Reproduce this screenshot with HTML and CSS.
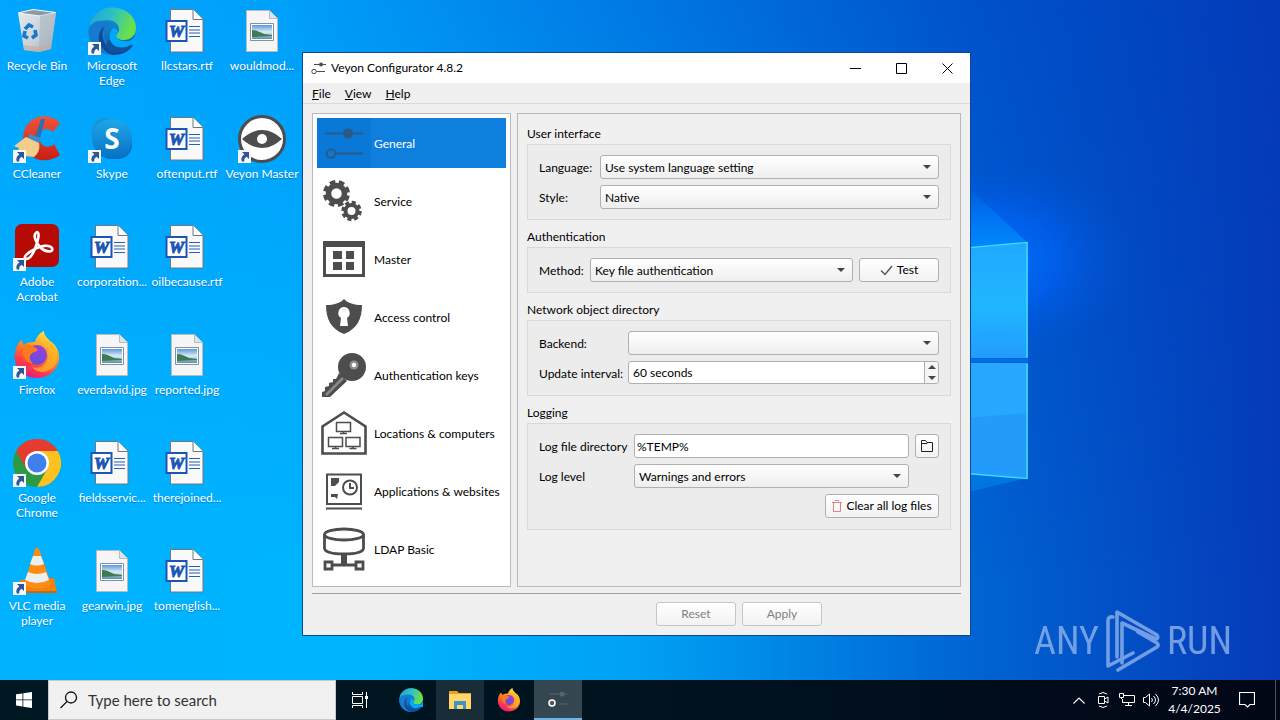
FILE: index.html
```html
<!DOCTYPE html>
<html lang="en">
<head>
<meta charset="utf-8">
<title>Veyon Configurator 4.8.2</title>
<link rel="stylesheet" href="styles.css">
</head>
<body>
<svg class="defs" width="0" height="0" aria-hidden="true">
  <defs>
    <linearGradient id="edgeA" x1="0" y1="0" x2="1" y2="0.3"><stop offset="0" stop-color="#1fa0d8"/><stop offset=".5" stop-color="#2cc0c8"/><stop offset="1" stop-color="#6be047"/></linearGradient>
    <linearGradient id="edgeB" x1="0" y1="0" x2="0" y2="1"><stop offset="0" stop-color="#1a9be0"/><stop offset="1" stop-color="#0c59a8"/></linearGradient>
    <linearGradient id="ffA" x1=".8" y1="0" x2=".3" y2="1"><stop offset="0" stop-color="#fff04a"/><stop offset=".4" stop-color="#ff9a20"/><stop offset=".75" stop-color="#ff3f45"/><stop offset="1" stop-color="#e31587"/></linearGradient>
    <linearGradient id="ffB" x1=".8" y1="0" x2=".2" y2="1"><stop offset="0" stop-color="#a13be0"/><stop offset="1" stop-color="#5a52d8"/></linearGradient>
    <linearGradient id="skyA" x1="0" y1="0" x2="0" y2="1"><stop offset="0" stop-color="#1fa8e8"/><stop offset="1" stop-color="#0670c4"/></linearGradient>
    <linearGradient id="binA" x1="0" y1="0" x2="1" y2="1"><stop offset="0" stop-color="#e4ebf0"/><stop offset=".6" stop-color="#c8d0d8"/><stop offset="1" stop-color="#9eabb8"/></linearGradient>
    <linearGradient id="ccA" x1="0" y1="0" x2="0" y2="1"><stop offset="0" stop-color="#f0543c"/><stop offset="1" stop-color="#c81e14"/></linearGradient>
    <linearGradient id="photoA" x1="0" y1="0" x2="0" y2="1"><stop offset="0" stop-color="#5c98dc"/><stop offset=".5" stop-color="#dcecf4"/><stop offset="1" stop-color="#5b8fae"/></linearGradient>
    <symbol id="i-link" viewBox="0 0 13 13"><path d="M0 0h13v13H0z" fill="#f7f7f7"/><path d="M4 2h7v7L8.700 6.800C6.500 8 6 9.500 6.300 11.500H3.800C2.600 8.500 3.800 6 6.400 4.400z" fill="#2b5797"/></symbol>
    <symbol id="i-bin" viewBox="0 0 48 48"><path d="M5 6 20 2.500l23 3L38 42l-12 3-15-2z" fill="url(#binA)"/><path d="M5 6 20 2.500l23 3-16 3.500z" fill="#8d9aa6" stroke="#f1f5f8" stroke-width="1.200"/><path d="m27 9-1 36 12-3L43 5.500z" fill="#a9b4be" opacity=".6"/><path d="M11 38l15 2 12-2-1 4-11 3-15-2z" fill="#c8a89a" opacity=".6"/><g fill="none" stroke="#1778d0" stroke-width="3.600"><path d="m12 22 4-4 4 2"/><path d="m22 23 1 5-4 3"/><path d="m15 31-4-2 1-5"/></g></symbol>
    <symbol id="i-edge" viewBox="0 0 48 48"><circle cx="24" cy="24" r="23.500" fill="url(#edgeB)"/><path d="M1 20C3 8 13 .5 24 .5 38 .5 48 10 48 21c0 8-6 12-12 12-5 0-8-2-8-4s3-3 3-7c0-5-5-9-11-9C11 13 3 17 1 20z" fill="url(#edgeA)"/><path d="M.5 24C2 16 9 13 16 14c7 0 10 4 10 4-9-1-10 6-10 9 0 10 9 15 17 14 5-1 9-3 11-5-4 7-12 12-20 12C11 48 .5 37 .5 24z" fill="#147bd0"/><path d="M17 19c-5 6-3 18 6 23 7 4 16 0 20-5 2-2 3-1 2 1-4 7-12 10-20 10-9-2-16-12-14-20 1-5 4-8 6-9z" fill="#104a94"/><path class="edge-gap" d="M28 29c0 3 5 6 13 5 4-1 7-5 7-9v13h-4c-8 7-20 4-22-5-1-6 1-11 4-12 5 2 4 5 2 8z"/><path d="M22 33c3 8 13 10 22 4-5 8-14 9-22 7-6-4-4-10 0-11z" fill="#12539c"/></symbol>
    <symbol id="i-doc" viewBox="0 0 48 48"><path d="M7.500 2.500H30l10 10V45H7.500z" fill="#f9f9f9" stroke="#707780"/><path d="M30 2.500v10h10" fill="#fff" stroke="#707780"/><path d="M26 19.500h11m-11 3.500h11m-11 3h11m-11 3.500h11" stroke="#2a5fb8"/><path d="M3.500 14h20v20h-20z" fill="#fff" stroke="#1d55b4" stroke-width="2"/><text x="13.500" y="30" text-anchor="middle" class="doc-letter">W</text></symbol>
    <symbol id="i-jpg" viewBox="0 0 48 48"><path d="M8.500 3.500h23l8 8v33h-31z" fill="#f5f5f5" stroke="#b8bcc0"/><path d="M31.500 3.500v8h8" fill="#dfe3e6" stroke="#b8bcc0"/><path d="M12.500 16.500h23v17h-23z" fill="#fff" stroke="#7f92a8"/><path d="M14 18h20v14H14z" fill="url(#photoA)"/><path d="M14 23c4 0 8 2 12 4l8 1v1c-8 0-14 1-20 1z" fill="#3f7a53"/></symbol>
    <symbol id="i-cc" viewBox="0 0 48 48"><path d="M47 8C36-3 18 0 12 14c-6 16 3 28 15 31 8 1 15-1 20-5l-6-11c-5 5-14 3-15-6-1-8 8-12 14-6z" fill="url(#ccA)"/><path d="M28 4h4l-6 23-5-2z" fill="#2d6eb0"/><path d="m16 19 12 4-3 8-10-7z" fill="#3d8bcb"/><path d="M13 22 1 31l5 2-2 5 8 3 9 1c5-4 6-9 5-14z" fill="#f3cd8a"/></symbol>
    <symbol id="i-skype" viewBox="0 0 48 48"><circle cx="17" cy="17" r="14" fill="#1a94dc"/><circle cx="30" cy="30" r="14" fill="#0a72c6"/><circle cx="24" cy="24" r="20" fill="url(#skyA)"/><text x="24" y="34" text-anchor="middle" class="skype-letter">S</text></symbol>
    <symbol id="i-veyon" viewBox="0 0 48 48"><circle cx="24" cy="24" r="22.500" fill="#fff" stroke="#4d4d4d" stroke-width="3"/><path d="M4 24c7-6 13-9 20-9s13 3 20 9c-7 6-13 9-20 9S11 30 4 24z" fill="#4d4d4d"/><circle cx="24" cy="24" r="5" fill="#fff"/></symbol>
    <symbol id="i-acro" viewBox="0 0 48 48"><rect x="2" y="1" width="44" height="43" rx="7" fill="#b50b04"/><path d="M24 9c-5 3-1 11 4 16 4 4 13 5 11 0-3-4-12-2-17 1-6 3-13 8-9 10 5 0 8-7 10-13 2-5 4-14 1-14z" fill="none" stroke="#fff" stroke-width="2.600"/></symbol>
    <symbol id="i-ff" viewBox="0 0 48 48"><path d="M2 22C3 16 5 11 9 9c0 2 1 4 2 5 3-3 7-3 11-3 1-4 4-9 9-11 0 5 3 6 6 10 7 4 10 12 9 19-2 11-11 18-22 18C10 47 0 36 2 22z" fill="url(#ffA)"/><circle cx="24" cy="24" r="10" fill="url(#ffB)"/><path d="M10 14c5-1 12 1 15 5-2 2-5 2-7 4-2 3-2 6 2 9-7 0-11-6-10-18z" fill="#ff7a1c"/><path d="M30 13c6 5 7 12 4 17-3 6-9 8-15 6 7 9 23 5 25-7 1-9-4-16-10-19z" fill="#ffb52a" opacity=".75"/></symbol>
    <symbol id="i-chrome" viewBox="0 0 48 48"><circle cx="24" cy="24" r="24" fill="#2c9a42"/><path d="M3.200 12A24 24 0 0 1 44.800 12H24L13.600 30z" fill="#e53b30"/><path d="M44.800 12A24 24 0 0 1 24 48l10.400-18L24 12z" fill="#fcc21f"/><circle cx="24" cy="24" r="12" fill="#fff"/><circle cx="24" cy="24" r="9.500" fill="#3f7fee"/></symbol>
    <symbol id="i-vlc" viewBox="0 0 48 48"><path d="m7 33 34-2 3 15H6z" fill="#f08210"/><path d="M22 2q2-2 4 0l12 35c-4 6-23 6-27 0z" fill="#ff8b12"/><path d="m20 9 8 0 3 8q-7 3-14 0zM15 25q9 4 18 0l3 8q-12 6-24 0z" fill="#eceff0"/><path d="M6 44h38v2H6z" fill="#d46505"/></symbol>
    <symbol id="i-sliders" viewBox="0 0 48 48"><path d="M5 13.500h38M15 33.500h28" stroke="currentColor" stroke-width="2"/><circle cx="28" cy="13.500" r="5" fill="currentColor"/><circle cx="11" cy="33.500" r="4.200" fill="none" stroke="currentColor" stroke-width="2"/></symbol>
    <symbol id="i-folder" viewBox="0 0 24 24"><path d="M1 3h8l2 2h12v5H1z" fill="#e8a223"/><path d="M1 6h22v15H1z" fill="#ffd667"/><path d="M6 13h12v8h-3v-4H9v4H6z" fill="#3c93c9"/></symbol>
  </defs>
</svg>

<main class="desktop">
  <svg class="wallpaper" viewBox="0 0 1280 720" preserveAspectRatio="none" aria-hidden="true">
    <defs>
      <linearGradient id="bgTop" x1="0" y1="0" x2="1" y2="0"><stop offset="0" stop-color="#00a6fe"/><stop offset=".22" stop-color="#00a0fa"/><stop offset=".5" stop-color="#0078e4"/><stop offset=".76" stop-color="#0052cc"/><stop offset="1" stop-color="#043bb8"/></linearGradient>
      <linearGradient id="bgLow" x1="0" y1="0" x2="1" y2="0"><stop offset="0" stop-color="#00b2ff"/><stop offset=".3" stop-color="#00b4ff"/><stop offset=".5" stop-color="#00a0f4"/><stop offset=".76" stop-color="#0064d2"/><stop offset="1" stop-color="#053ab8"/></linearGradient>
      <linearGradient id="fade" x1="0" y1="0" x2="0" y2="1"><stop offset="0" stop-color="#000"/><stop offset=".8" stop-color="#fff"/></linearGradient>
      <mask id="lowMask"><path d="M0 0h1280v720H0z" fill="url(#fade)"/></mask>
      <radialGradient id="glow"><stop offset="0" stop-color="#0074ff"/><stop offset=".45" stop-color="#0062f4" stop-opacity=".7"/><stop offset="1" stop-color="#0050d0" stop-opacity="0"/></radialGradient>
      <linearGradient id="beam" x1="0" y1="0" x2="0" y2="1"><stop offset="0" stop-color="#009cff" stop-opacity="0"/><stop offset="1" stop-color="#009cff" stop-opacity=".6"/></linearGradient>
      <linearGradient id="paneA" x1="0" y1="0" x2="0" y2="1"><stop offset="0" stop-color="#22a8ff"/><stop offset=".55" stop-color="#20b6ff"/><stop offset="1" stop-color="#229cff"/></linearGradient>
    </defs>
    <path d="M0 0h1280v720H0z" fill="url(#bgTop)"/>
    <path d="M0 0h1280v720H0z" fill="url(#bgLow)" mask="url(#lowMask)"/>
    <ellipse cx="990" cy="260" rx="150" ry="105" fill="url(#glow)"/>
    <path d="M960 180 1028 243l-68 8z" fill="url(#beam)"/>
    <path d="M960 465l68 13-68 16z" fill="#008cf4" opacity=".5"/>
    <path d="M900 255 1028 243v115H900z" fill="url(#paneA)"/>
    <path d="M900 363h128v115l-128-10z" fill="#239bfa"/>
    <path d="M900 363h128v50l-128 10z" fill="#27a8ff"/>
    <path d="M900 254 1027 242.500v115M900 468l127 10.500V364" fill="none" stroke="#3fd8ff" stroke-width="1.500"/>
    <path d="M900 360.500h128" stroke="#006ee4" stroke-width="4"/>
  </svg>

  <nav class="shortcuts" aria-label="Desktop">
    <a class="shortcut" href="#"><svg><use href="#i-bin"/></svg>Recycle Bin</a>
    <a class="shortcut" href="#"><svg><use href="#i-cc"/><use href="#i-link" y="35" width="13" height="13"/></svg>CCleaner</a>
    <a class="shortcut" href="#"><svg><use href="#i-acro"/><use href="#i-link" y="35" width="13" height="13"/></svg>Adobe<br>Acrobat</a>
    <a class="shortcut" href="#"><svg><use href="#i-ff"/><use href="#i-link" y="35" width="13" height="13"/></svg>Firefox</a>
    <a class="shortcut" href="#"><svg><use href="#i-chrome"/><use href="#i-link" y="35" width="13" height="13"/></svg>Google<br>Chrome</a>
    <a class="shortcut" href="#"><svg><use href="#i-vlc"/><use href="#i-link" y="35" width="13" height="13"/></svg>VLC media<br>player</a>
    <a class="shortcut" href="#"><svg><use href="#i-edge"/><use href="#i-link" y="35" width="13" height="13"/></svg>Microsoft<br>Edge</a>
    <a class="shortcut" href="#"><svg><use href="#i-skype"/><use href="#i-link" y="35" width="13" height="13"/></svg>Skype</a>
    <a class="shortcut" href="#"><svg><use href="#i-doc"/></svg>corporation...</a>
    <a class="shortcut" href="#"><svg><use href="#i-jpg"/></svg>everdavid.jpg</a>
    <a class="shortcut" href="#"><svg><use href="#i-doc"/></svg>fieldsservic...</a>
    <a class="shortcut" href="#"><svg><use href="#i-jpg"/></svg>gearwin.jpg</a>
    <a class="shortcut" href="#"><svg><use href="#i-doc"/></svg>llcstars.rtf</a>
    <a class="shortcut" href="#"><svg><use href="#i-doc"/></svg>oftenput.rtf</a>
    <a class="shortcut" href="#"><svg><use href="#i-doc"/></svg>oilbecause.rtf</a>
    <a class="shortcut" href="#"><svg><use href="#i-jpg"/></svg>reported.jpg</a>
    <a class="shortcut" href="#"><svg><use href="#i-doc"/></svg>therejoined...</a>
    <a class="shortcut" href="#"><svg><use href="#i-doc"/></svg>tomenglish...</a>
    <a class="shortcut" href="#"><svg><use href="#i-jpg"/></svg>wouldmod...</a>
    <a class="shortcut" href="#"><svg><use href="#i-veyon"/><use href="#i-link" y="35" width="13" height="13"/></svg>Veyon Master</a>
  </nav>

  <div class="watermark"><span>ANY</span>
    <svg width="56" height="64" viewBox="0 0 56 64" aria-hidden="true"><g fill="none" stroke="currentColor" stroke-width="3.600" stroke-linejoin="round" stroke-linecap="round"><path d="M8 8Q3 7 3 12v45L28 44"/><path d="M12 48V3l40 23q2 3-1 4L17 14v40"/><path d="M13 61 52 38q2-2 0-4L33 23"/></g></svg>
    <span>RUN</span></div>

  <section class="window" aria-label="Veyon Configurator">
    <header class="titlebar">
      <svg class="app-icon" viewBox="0 0 16 14"><path d="M3 3.500h12M5 10.500h9" stroke="#4d4d4d"/><circle cx="10" cy="3.500" r="2" fill="#4d4d4d"/><circle cx="3" cy="10.500" r="2.200" fill="#fff" stroke="#4d4d4d"/></svg>
      <h1 class="title">Veyon Configurator 4.8.2</h1>
      <button class="caption" aria-label="Minimize"><svg width="11" height="11"><path d="M0 5.500h11" stroke="#000"/></svg></button>
      <button class="caption" aria-label="Maximize"><svg width="11" height="11"><path d="M.5.5h10v10H.5z" stroke="#000" fill="none"/></svg></button>
      <button class="caption" aria-label="Close"><svg width="11" height="11"><path d="m.5.500 10 10m0-10-10 10" stroke="#000"/></svg></button>
    </header>
    <div class="menubar">
      <button class="menu"><u>F</u>ile</button><button class="menu"><u>V</u>iew</button><button class="menu"><u>H</u>elp</button>
    </div>
    <div class="body">
      <nav class="pages" aria-label="Pages">
        <button class="page selected"><svg><use href="#i-sliders"/></svg><span>General</span></button>
        <button class="page"><svg viewBox="0 0 48 48"><g fill="none" stroke="currentColor"><circle cx="16.500" cy="15.500" r="8" stroke-width="5.500"/><circle cx="16.500" cy="15.500" r="11.500" stroke-width="4" stroke-dasharray="5.500 3.530" transform="rotate(10 16.500 15.500)"/><circle cx="31.500" cy="33" r="6" stroke-width="4"/><circle cx="31.500" cy="33" r="8.500" stroke-width="3.500" stroke-dasharray="4 2.670"/></g></svg><span>Service</span></button>
        <button class="page"><svg viewBox="0 0 48 48"><path d="M3 5h42v36H3zm3 6v27h36V11z" fill-rule="evenodd"/><path d="M13 15h9v8h-9zm13 0h8v8h-8zM13 26h9v8h-9zm13 0h8v8h-8z"/></svg><span>Master</span></button>
        <button class="page"><svg viewBox="0 0 48 48"><path d="M24 5c4 4 10 6 18 6 0 14-5 24-18 29C11 35 6 25 6 11c8 0 14-2 18-6zm0 8a6 6 0 0 0-3 11l-1 8h8l-1-8a6 6 0 0 0-3-11z" fill-rule="evenodd"/></svg><span>Access control</span></button>
        <button class="page"><svg viewBox="0 0 48 48"><circle cx="32" cy="15" r="14"/><path d="m19 21 8 8L10 45H2v-5l3-1v-4l4-1v-3l4-1v-3h3z"/><path d="M23 26 6 43" stroke="#8a8a8a" stroke-width="2.500"/><circle cx="34" cy="13" r="4.500" fill="#909090"/><circle cx="34" cy="13" r="2.200" fill="#fff"/></svg><span>Authentication keys</span></button>
        <button class="page"><svg viewBox="0 0 48 48"><g fill="none" stroke="currentColor"><path d="M2.500 43.500v-27L24 2.500l21.500 14v27z" stroke-width="2.600"/><path d="M16.500 12.500h14v9h-14zM8.500 27.500h14v9h-14zM26 27.500h14v9H26z" stroke-width="1.500"/><path d="M20 23.500h7M12 38.500h7m10.500 0h7M23.500 21v3m-8 12v3M33 36v3" stroke-width="1.500"/></g></svg><span>Locations &amp; computers</span></button>
        <button class="page"><svg viewBox="0 0 48 48"><g fill="none" stroke="currentColor" stroke-width="2"><path d="M7 6.500h34V36H7zM6 40.500h36"/><circle cx="30" cy="19.500" r="7"/><path d="M30 15v5h4"/></g><path d="M11 10h8v4l-4 4h-4zM11 26h7l-1 5-2-2h-4z"/></svg><span>Applications &amp; websites</span></button>
        <button class="page"><svg viewBox="0 0 48 48"><g fill="none" stroke="currentColor" stroke-width="2.800"><ellipse cx="24" cy="8.500" rx="19.500" ry="5.500"/><path d="M4.500 8.500V22c0 4 8 6 19.500 6s19.500-2 19.500-6V8.500M12 39h24M5 36h7v7H5zM36 36h7v7h-7z"/></g><path d="M21 28h6v10h-6z"/></svg><span>LDAP Basic</span></button>
      </nav>
      <form class="panel">
        <h2 class="group-title">User interface</h2>
        <div class="group form-a">
          <label for="lang">Language:</label><select id="lang"><option>Use system language setting</option></select>
          <label for="style">Style:</label><select id="style"><option>Native</option></select>
        </div>
        <h2 class="group-title">Authentication</h2>
        <div class="group form-b">
          <label for="method">Method:</label><select id="method"><option>Key file authentication</option></select>
          <button type="button" class="btn"><svg width="13" height="12"><path d="m1 6.500 4 4L12 2" fill="none" stroke="#555" stroke-width="1.400"/></svg>Test</button>
        </div>
        <h2 class="group-title">Network object directory</h2>
        <div class="group form-c">
          <label for="backend">Backend:</label><select id="backend"><option></option></select>
          <label for="interval">Update interval:</label>
          <div class="spin"><input id="interval" type="text" value="60 seconds"><span class="steps"><button type="button" aria-label="Increase"><svg width="8" height="4"><path d="M0 4h8L4 0z"/></svg></button><button type="button" aria-label="Decrease"><svg width="8" height="4"><path d="M0 0h8L4 4z"/></svg></button></span></div>
        </div>
        <h2 class="group-title">Logging</h2>
        <div class="group form-d">
          <label for="dir">Log file directory</label><input class="field" id="dir" type="text" value="%TEMP%">
          <button type="button" class="btn browse" aria-label="Browse"><svg width="12" height="12"><path d="M.5 11.500V.5h4l1.500 2h5.500v9z" fill="none" stroke="#222"/><path d="M1 3.500h5l1-1" fill="none" stroke="#222"/></svg></button>
          <label for="level">Log level</label><select id="level"><option>Warnings and errors</option></select>
          <button type="button" class="btn clear"><svg width="10" height="12"><path d="M0 2.500h10M3 .5h4M1.500 3v8.500h7V3" fill="none" stroke="#e87c86"/></svg>Clear all log files</button>
        </div>
      </form>
    </div>
    <footer class="actions"><button class="btn" disabled>Reset</button><button class="btn" disabled>Apply</button></footer>
  </section>
</main>

<footer class="taskbar">
  <button class="task" aria-label="Start"><svg width="16" height="16" fill="#fff"><path d="m0 2.300 6.500-.9v6.100H0zM7.300 1.300 16 0v7.500H7.300zM0 8.300h6.500v6.200L0 13.600zM7.300 8.300H16V16l-8.700-1.300z"/></svg></button>
  <label class="search"><svg width="18" height="18"><circle cx="11" cy="6.500" r="5.500" fill="none" stroke="#111" stroke-width="1.300"/><path d="M7 10.500.5 17" stroke="#111" stroke-width="1.300"/></svg><input type="text" aria-label="Search" placeholder="Type here to search"></label>
  <button class="task" aria-label="Task view"><svg width="18" height="16" fill="none" stroke="#fff"><path d="M1.500 0v2.500h10V0M1.500 16v-2.500h10V16M1.500 4.500h10v7h-10zM15.500 0v16"/><path d="M14 5.500h3" stroke-width="3"/></svg></button>
  <div class="apps">
    <button class="task" aria-label="Edge"><svg width="24" height="24" viewBox="0 0 48 48"><use href="#i-edge" width="48" height="48"/></svg></button>
    <button class="task open" aria-label="File Explorer"><svg width="24" height="24"><use href="#i-folder"/></svg></button>
    <button class="task" aria-label="Firefox"><svg width="24" height="24"><use href="#i-ff"/></svg></button>
    <button class="task active" aria-label="Veyon Configurator"><svg width="24" height="24" viewBox="0 0 24 24"><path d="M3 7h18m-8 10h9" stroke="#59656b"/><circle cx="16" cy="7" r="2.500" fill="#59656b"/><circle cx="6" cy="16" r="3" fill="#555" stroke="#fff" stroke-width="1.500"/></svg></button>
  </div>
  <div class="tray">
    <button aria-label="Show hidden icons"><svg width="12" height="7"><path d="M.5 6.500 6 1l5.500 5.500" fill="none" stroke="#fff" stroke-width="1.200"/></svg></button>
    <button aria-label="Meet now"><svg width="12" height="16" fill="none" stroke="#fff"><path d="M1.500 4.500h6v7h-6zM7.500 7 11 5v6L7.500 9M2 2q4-3 8 0M2 14q4 3 8 0"/></svg></button>
    <button aria-label="Network"><svg width="16" height="14" fill="none" stroke="#fff"><path d="M5 2.500h10.500v7H3.500V6M6 12.500h7M9.500 10v2.500M.5.500h4v4h-4zM2.500 4v2"/></svg></button>
    <button aria-label="Volume"><svg width="16" height="14" fill="none" stroke="#fff"><path d="M.5 4.500h2l4-3.500v12l-4-3.500h-2zM8.500 5q2 2 0 4M10.500 3q4 4 0 8M12.500 1q6 6 0 12"/></svg></button>
  </div>
  <div class="clock"><time>7:30 AM</time><time>4/4/2025</time></div>
  <button class="notify" aria-label="Notifications"><svg width="16" height="16"><path d="M.5.500h15v12H11L8.500 15 6 12.500H.5z" fill="none" stroke="#fff" stroke-width="1.200"/></svg></button>
</footer>
</body>
</html>
```

FILE: styles.css
```css
* { box-sizing: border-box; }

body {
  margin: 0;
  height: 100vh;
  display: flex;
  flex-direction: column;
  overflow: hidden;
  font: 12px/16px Lato, "Open Sans", sans-serif;
  color: #000;
}

button, input, select { font: inherit; color: inherit; }
button { border: 0; padding: 0; background: none; }
.defs { position: absolute; }

/* Desktop */
.desktop { position: relative; flex: 1; min-height: 0; background: #00a8ff; }
.wallpaper { position: absolute; inset: 0; width: 100vw; height: 100vh; }

.shortcuts {
  position: relative;
  display: grid;
  grid-auto-flow: column;
  grid-template-rows: repeat(6, 108px);
  grid-auto-columns: 75px;
  justify-content: start;
}
.shortcut {
  display: flex;
  flex-direction: column;
  align-items: center;
  padding: 7px 1px 0 0;
  color: #fff;
  font-size: 12px;
  line-height: 15px;
  text-align: center;
  text-decoration: none;
  white-space: nowrap;
  text-shadow: 0 1px 1px rgba(0, 50, 110, .4);
}
.shortcut svg { width: 48px; height: 48px; margin-bottom: 3px; flex: none; }
.edge-gap { fill: #00a8ff; }
.doc-letter { font: italic bold 17px "Liberation Serif", serif; fill: #1d55b4; stroke: #1d55b4; text-shadow: none; }
.skype-letter { font: bold 28px "Open Sans", sans-serif; fill: #fff; text-shadow: none; }

.watermark {
  position: absolute;
  right: 48px;
  bottom: 7px;
  display: flex;
  align-items: center;
  gap: 6px;
  color: #8fb2ec;
  opacity: .8;
  font: 38px/64px "Liberation Sans Narrow", "Roboto Condensed", "DejaVu Sans Condensed", sans-serif;
}

/* Window */
.window {
  position: absolute;
  left: 303px;
  top: 53px;
  width: 667px;
  background: #f0f0f0;
  outline: 1px solid #0b4a8e;
}
.titlebar { display: flex; align-items: stretch; height: 30px; padding-left: 8px; background: #fff; }
.app-icon { width: 16px; height: 14px; align-self: center; }
.title { flex: 1; margin: 0 0 0 4px; font-size: 12px; font-weight: 400; line-height: 30px; }
.caption { width: 46px; display: grid; place-items: center; }

.menubar { display: flex; height: 21px; padding: 1px 0 0 9px; gap: 14px; border-bottom: 1px solid #d9d9d9; }

.body { display: flex; gap: 6px; padding: 9px 9px 0; }
.pages {
  flex: none;
  width: 199px;
  display: flex;
  flex-direction: column;
  gap: 8px;
  padding: 4px 4px 12px;
  background: #fff;
  border: 1px solid #b9b9b9;
}
.page { display: flex; align-items: center; height: 50px; color: #000; text-align: left; white-space: nowrap; }
.page svg { width: 54px; height: 50px; padding: 2px 3px 0; flex: none; margin-right: 3px; color: #4d4d4d; fill: #4d4d4d; }
.page span { padding-top: 2px; }
.page.selected { background: #0f7fdd; color: #fff; }
.page.selected svg { background: #0a78d6; color: #2d5a85; }

.panel { flex: 1; padding: 3px 9px 0; border: 1px solid #b9b9b9; }
.group-title { margin: 0; padding-top: 7px; font-size: 12px; font-weight: 400; line-height: 20px; }
.group {
  display: grid;
  align-items: center;
  gap: 6px;
  padding: 10px 11px;
  border: 1px solid #d9d9d9;
  background: #ececec;
}
.form-a { grid-template-columns: 55px 1fr; }
.form-b { grid-template-columns: 45px 1fr 80px; }
.form-c { grid-template-columns: 83px 1fr; }
.form-d { grid-template-columns: 89px 1fr 24px; }
.group label { white-space: nowrap; padding-top: 2px; }

select, .btn, .field, .spin {
  height: 24px;
  min-width: 0;
  width: 100%;
  border: 1px solid #b0b0b0;
  border-radius: 3px;
  background-color: #fdfdfd;
}
select {
  appearance: none;
  padding: 1px 20px 0 4px;
  background: url("data:image/svg+xml,%3Csvg xmlns='http://www.w3.org/2000/svg' width='8' height='4'%3E%3Cpath d='M0 0h8L4 4z' fill='%23444'/%3E%3C/svg%3E") no-repeat right 7px center, linear-gradient(#fff, #eee);
}
.btn { display: flex; align-items: center; justify-content: center; gap: 4px; background: linear-gradient(#fff, #f2f2f2); }
.field { padding: 0 2px; background: #fff; }
.spin { height: 23px; display: flex; overflow: hidden; background: #fff; }
.spin input { flex: 1; min-width: 0; border: 0; padding: 1px 4px 0; background: none; }
.steps { display: flex; flex-direction: column; width: 14px; border-left: 1px solid #b0b0b0; background: #f5f5f5; }
.steps button { flex: 1; display: grid; place-items: center; }
.steps svg { fill: #444; }
.clear { grid-column: 1 / -1; justify-self: end; width: 114px; }
.form-c, .form-d { padding-bottom: 11px; }

.actions {
  display: flex;
  justify-content: flex-end;
  gap: 6px;
  margin: 6px 9px 0;
  padding: 8px 139px 9px;
  border-top: 1px solid #a0a0a0;
}
.actions .btn { width: 80px; color: #808080; border-color: #c6c6c6; }

/* Taskbar */
.taskbar { position: relative; display: flex; height: 40px; background: linear-gradient(90deg, #001822, #00131f 50%, #020716); color: #fff; }
.task { width: 48px; display: grid; place-items: center; }
.search { width: 288px; display: flex; align-items: center; gap: 10px; padding-left: 11px; background: #f1f1f1; border: 1px solid #c8c8c8; }
.search input { border: 0; padding: 0; background: none; font-size: 15px; line-height: 20px; }
.search input::placeholder { color: #333; opacity: 1; }
.apps { display: flex; gap: 1px; margin-left: 3px; flex: 1; }
.open { background: #182d38; }
.active { background: #344650; border-bottom: 2px solid #6cb4e8; }
.tray { display: flex; }
.tray button { width: 24px; display: grid; place-items: center; }
.clock { width: 63px; display: flex; flex-direction: column; justify-content: center; text-align: center; line-height: 18px; white-space: nowrap; }
.notify { width: 50px; margin-right: 4px; padding-right: 8px; display: grid; place-items: center; border-right: 1px solid #4a5566; }
```
